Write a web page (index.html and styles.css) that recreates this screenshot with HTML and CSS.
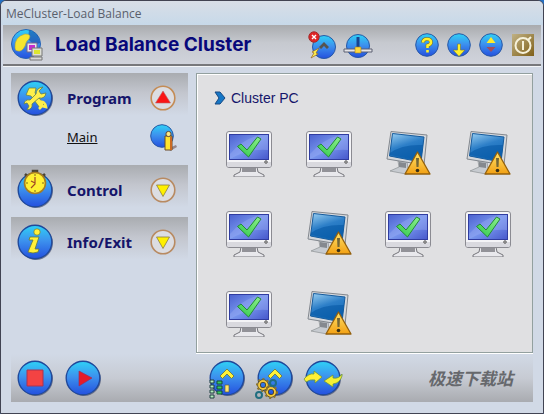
FILE: index.html
```html
<!DOCTYPE html>
<html lang="en">
<head>
<meta charset="utf-8">
<title>MeCluster-Load Balance</title>
<link rel="stylesheet" href="styles.css">
</head>
<body>
<svg class="defs" aria-hidden="true">
  <defs>
    <linearGradient id="blue" x1="0" y1="0" x2="0" y2="1"><stop offset="0" stop-color="#2ed2f6"/><stop offset=".45" stop-color="#3d93ee"/><stop offset="1" stop-color="#2450de"/></linearGradient>
    <linearGradient id="screen" x1="0" y1="0" x2="1" y2="1"><stop offset="0" stop-color="#4c62cf"/><stop offset=".5" stop-color="#7896ee"/><stop offset="1" stop-color="#4657cb"/></linearGradient>
    <linearGradient id="glass" x1="0" y1="0" x2=".4" y2="1"><stop offset="0" stop-color="#9bd0f2"/><stop offset=".5" stop-color="#2d7fc8"/><stop offset="1" stop-color="#1268b4"/></linearGradient>
    <linearGradient id="amber" x1="0" y1="0" x2="0" y2="1"><stop offset="0" stop-color="#ffe36a"/><stop offset="1" stop-color="#f2a013"/></linearGradient>
    <linearGradient id="green" x1="1" y1="0" x2="0" y2="1"><stop offset="0" stop-color="#8df08a"/><stop offset="1" stop-color="#2fc84c"/></linearGradient>
    <linearGradient id="bronze" x1="0" y1="0" x2="1" y2="1"><stop offset="0" stop-color="#c0b184"/><stop offset="1" stop-color="#806018"/></linearGradient>
  </defs>
  <symbol id="ball" viewBox="0 0 36 36"><circle cx="19" cy="19" r="17" fill="#49516f" opacity=".7"/><circle cx="18" cy="18" r="16.8" fill="url(#blue)" stroke="#20499b" stroke-width="1.4"/></symbol>
  <symbol id="pc-ok" viewBox="0 0 48 48">
    <path d="M16 38h16l1 5 6 3v2H9v-2l6-3z" fill="#e8e8ec" stroke="#77777d"/><path d="M17 39h14v4H17z" fill="#929298"/>
    <rect x="1.5" y="2.5" width="45" height="36" rx="2.5" fill="#f4f4f7" stroke="#8b8b92"/>
    <path d="M2 33h44v3q0 2-2 2H4q-2 0-2-2z" fill="#d9d9df"/>
    <rect x="4.5" y="5.5" width="39" height="25" fill="url(#screen)" stroke="#303ca0"/>
    <path d="M5 25Q18 10 35 6h8v15Q25 19 5 30z" fill="#9cadf2" opacity=".4"/>
    <path d="M12.5 17.500 16 15l6 6L32.500 8l3.500 2-12.500 18z" fill="url(#green)" stroke="#238b36"/>
    <path d="m41 31 2 2-2 2-2-2z" fill="#444"/><circle cx="41" cy="33" r=".7" fill="#fff"/>
  </symbol>
  <symbol id="pc-warn" viewBox="0 0 48 48">
    <path d="M14 32l9 1 1 6 6 4-8 2-16-3 9-4z" fill="#c7cbd0" stroke="#8c9094" stroke-width=".7"/><path d="M15 33l7 1v5l-7-1z" fill="#85898f"/>
    <path d="M7 2.500 43 6l-3 30L3 30z" fill="#d5d8dc" stroke="#82878e"/>
    <path d="M8.500 4.500 40 8l-3 25L5.500 27z" fill="url(#glass)" stroke="#155b9d"/>
    <path d="M6 24Q18 15 39 16l-2 16-31-6z" fill="#0759a5" opacity=".6"/>
    <path d="M33.500 23 46 45H21z" fill="url(#amber)" stroke="#94600c" stroke-width="1.300" stroke-linejoin="round"/>
    <path d="M32 29h3l-.5 9h-2z" fill="#756735"/><circle cx="33.500" cy="41.500" r="1.800" fill="#383018"/>
  </symbol>
  <symbol id="ring-down" viewBox="0 0 26 26"><circle cx="13" cy="13" r="11.800" fill="#dcdde2" stroke="#b88a61" stroke-width="1.600"/><path d="M6.500 8h13L13 19.500z" fill="#fff000" stroke="#8b7d42" stroke-width=".8"/></symbol>
</svg>

<div class="window">
  <header class="titlebar">MeCluster-Load Balance</header>

  <div class="toolbar">
    <svg class="logo" viewBox="0 0 32 32" aria-hidden="true">
      <circle cx="15" cy="15" r="14.500" fill="url(#blue)" stroke="#2864b5"/>
      <path d="M18 1q10 3 11 13l-6 2-6-6z" fill="#153d9a" opacity=".55"/>
      <path d="M4 19Q3 8 14 5q7 0 4 5-3 2-4 7-3 6-7 5-3 0-3-3z" fill="#f6e52f" stroke="#b2a63b" stroke-width=".6"/>
      <path d="M16 14h10v9H16z" fill="#e8e4ee" stroke="#72698a"/><path d="M18 16h6v5h-6z" fill="#c52ad0"/>
      <path d="M21 19h10v8H21z" fill="#dedfd4" stroke="#777"/><path d="M23 21h6v4h-6z" fill="#dce62f"/><path d="M19 28h12v3H19z" fill="#d8d8d8" stroke="#777"/>
    </svg>
    <h1 class="heading">Load Balance Cluster</h1>
    <div class="tools">
      <button class="tool" aria-label="Disconnect"><svg class="icon-28" viewBox="0 0 28 28">
        <circle cx="16" cy="16" r="11.500" fill="url(#blue)" stroke="#2858a5"/><path d="m11 16 5-5 5 5-2 2-3-3-3 3z" fill="#55544f"/>
        <path d="m3 27 3-5-2-1 7-4-3 5 2 1z" fill="#fff04b" stroke="#946329" stroke-width=".7"/>
        <circle cx="6" cy="6" r="5.200" fill="#df2525" stroke="#a52b2b"/><path d="m4 4 4 4m0-4-4 4" stroke="#fff" stroke-width="1.400"/></svg></button>
      <button class="tool" aria-label="Network"><svg class="icon-28" viewBox="0 0 28 28">
        <circle cx="14" cy="15" r="11.500" fill="url(#blue)" stroke="#2858a5"/><path d="M12.500 6h3v10h-3z" fill="#18438e"/>
        <path d="M0 18h28v3H0z" fill="#e4e4e8" stroke="#5c6172"/><path d="M11 16h6v6h-6z" fill="#ffd83d" stroke="#a27c28" stroke-width=".6"/></svg></button>
    </div>
    <div class="tools tools-end">
      <button class="tool" aria-label="Help"><svg class="icon-24" viewBox="0 0 24 24"><circle cx="12" cy="12" r="11.300" fill="url(#blue)" stroke="#2858a5"/><path d="M8 9.500Q8 6 12 6t4 3.200q0 2.300-3.500 3.300V15" fill="none" stroke="#776a20" stroke-width="3.600"/><path d="M8 9.500Q8 6 12 6t4 3.200q0 2.300-3.500 3.300V15m0 2v2.500" fill="none" stroke="#fff12b" stroke-width="2.600"/></svg></button>
      <button class="tool" aria-label="Minimize"><svg class="icon-24" viewBox="0 0 24 24"><circle cx="12" cy="12" r="11.300" fill="url(#blue)" stroke="#2858a5"/><path d="M10.500 11h3v6h4.500l-6 6.500L6 17h4.500z" fill="#fff02b" stroke="#6d7b52" stroke-width=".7"/></svg></button>
      <button class="tool" aria-label="Resize"><svg class="icon-24" viewBox="0 0 24 24"><circle cx="12" cy="12" r="11.300" fill="url(#blue)" stroke="#2858a5"/><path d="m12 4 4.500 6h-9z" fill="#ffec2b"/><path d="m12 19 4.500-5h-9z" fill="#a34c5c"/></svg></button>
      <button class="tool" aria-label="Exit"><svg class="icon-24" viewBox="0 0 24 24"><path d="M1 1h22v22H1z" fill="url(#bronze)"/><circle cx="12" cy="12.500" r="7.500" fill="none" stroke="#f6f1da" stroke-width="2"/><path d="M12 8v9m5-10 3-3" stroke="#f6f1da" stroke-width="2"/></svg></button>
    </div>
  </div>

  <div class="content">
    <nav class="sidebar">
      <button class="section"><svg class="icon-36" viewBox="0 0 36 36"><use href="#ball"/>
        <path d="M12 8h7l-1 5 9 11-4 4-9-12-5-1z" fill="#fff04a" stroke="#69854b" stroke-width=".8"/>
        <path d="m26 7-4 4 2 3 5-1q-1 6-7 5l-7 6q1 5-5 6l2-4-2-3-3 1q1-5 6-4l6-6q0-6 7-7z" fill="#ffef4c" stroke="#5d7f55" stroke-width=".8"/><path d="M23 22q5-1 6 5l-4-1-3 3" fill="none" stroke="#ffef4c" stroke-width="2.500"/></svg>
        <span>Program</span>
        <svg class="icon-26" viewBox="0 0 26 26"><circle cx="13" cy="13" r="11.800" fill="#dcdde2" stroke="#c48c55" stroke-width="1.600"/><path d="M13 6 20.500 18h-15z" fill="#fa1515" stroke="#b86767" stroke-width=".6"/></svg></button>
      <div class="entry"><a href="#main">Main</a>
        <svg class="icon-26" viewBox="0 0 26 26"><path d="m19 24 7-3 1 2-7 4z" fill="#96868a"/><circle cx="12" cy="12" r="11.300" fill="url(#blue)" stroke="#2858a5"/><path d="M15 12h7v14h-7z" fill="#ffe32e" stroke="#6b4b28"/><path d="M20 13h2v13h-2z" fill="#cb6a22"/><circle cx="18.500" cy="10" r="2.600" fill="#ffe984" stroke="#5d4938"/></svg></div>
      <button class="section"><svg class="icon-36" viewBox="0 0 36 36"><use href="#ball"/>
        <path d="m8 2 3 3m17-3-3 3M16-1h4v4h-4z" stroke="#4b4535" stroke-width="2.500" fill="#777"/><circle cx="18" cy="11" r="10.500" fill="#fff032" stroke="#a77d21" stroke-width="1.600"/><path d="M18 5v7l-4 4m4-5-4-2" fill="none" stroke="#a14826" stroke-width="1.200"/><path d="M18 2v2m0 14v2M9 11h2m14 0h2" stroke="#806b1e"/></svg>
        <span>Control</span><svg class="icon-26"><use href="#ring-down"/></svg></button>
      <button class="section"><svg class="icon-36" viewBox="0 0 36 36"><use href="#ball"/>
        <circle cx="20" cy="8" r="3.200" fill="#fff13a" stroke="#66783c" stroke-width=".7"/><path d="M13 13h9l-4 12h4l-1 3q-5 2-10 0l5-12h-4z" fill="#fff13a" stroke="#66783c" stroke-width=".8"/></svg>
        <span>Info/Exit</span><svg class="icon-26"><use href="#ring-down"/></svg></button>
    </nav>

    <main class="panel" id="main">
      <h2 class="panel-title"><svg class="chevron" viewBox="0 0 12 14"><path d="M1 1h5l5 6-5 6H1l4-6z" fill="#1677c6" stroke="#184982"/></svg>Cluster PC</h2>
      <div class="pcs">
        <svg class="pc" role="img" aria-label="Online"><use href="#pc-ok"/></svg>
        <svg class="pc" role="img" aria-label="Online"><use href="#pc-ok"/></svg>
        <svg class="pc" role="img" aria-label="Warning"><use href="#pc-warn"/></svg>
        <svg class="pc" role="img" aria-label="Warning"><use href="#pc-warn"/></svg>
        <svg class="pc" role="img" aria-label="Online"><use href="#pc-ok"/></svg>
        <svg class="pc" role="img" aria-label="Warning"><use href="#pc-warn"/></svg>
        <svg class="pc" role="img" aria-label="Online"><use href="#pc-ok"/></svg>
        <svg class="pc" role="img" aria-label="Online"><use href="#pc-ok"/></svg>
        <svg class="pc" role="img" aria-label="Online"><use href="#pc-ok"/></svg>
        <svg class="pc" role="img" aria-label="Warning"><use href="#pc-warn"/></svg>
      </div>
    </main>
  </div>

  <footer class="actions">
    <div class="group">
      <button aria-label="Stop"><svg class="icon-36" viewBox="0 0 36 36"><use href="#ball"/><path d="M10 10h16v16H10z" fill="#f34343" stroke="#a93352"/></svg></button>
      <button aria-label="Start"><svg class="icon-36" viewBox="0 0 36 36"><use href="#ball"/><path d="m14 11 13 7-13 8z" fill="#e51b29" stroke="#943061" stroke-width=".7"/></svg></button>
    </div>
    <div class="group group-main">
      <button aria-label="Servers"><svg class="icon-36" viewBox="0 0 36 36"><use href="#ball"/>
        <path d="m11 16 7-7 7 7-2.500 2.500L18 14l-4.500 4.500z" fill="#fff238" stroke="#63713d" stroke-width=".8"/>
        <path d="M1 20h4v3H1zm0 5h4v3H1zm0 5h4v3H1zm0 5h4v3H1z" fill="#b5efbc" stroke="#1f3c40"/><path d="M8 21h5v3H8zm0 5h5v3H8zm0 5h5v3H8z" fill="#36cb65" stroke="#174b35"/><path d="M16 25h4v7h-4z" fill="#ffe36c" stroke="#5c6340" stroke-width=".7"/></svg></button>
      <button aria-label="Settings"><svg class="icon-36" viewBox="0 0 36 36"><use href="#ball"/>
        <path d="m11 16 7-7 7 7-2.500 2.500L18 14l-4.500 4.500z" fill="#fff238" stroke="#63713d" stroke-width=".8"/>
        <g fill="none" stroke="#473d28" stroke-width="3.600"><circle cx="6" cy="25" r="4"/><circle cx="14" cy="32" r="4"/></g>
        <g fill="none" stroke="#f2c93e" stroke-width="2"><circle cx="6" cy="25" r="4"/><circle cx="14" cy="32" r="4"/></g>
        <g fill="none" stroke="#8c752c" stroke-width="2" stroke-dasharray="2 2.500"><circle cx="6" cy="25" r="6"/><circle cx="14" cy="32" r="6"/></g>
        <g fill="none" stroke="#216e80" stroke-width="2"><circle cx="16" cy="23" r="3"/><circle cx="2" cy="35" r="3"/></g></svg></button>
      <button aria-label="Balance"><svg class="icon-36" viewBox="0 0 36 36"><use href="#ball"/>
        <path d="M-1 19q5-6 10-5V11l8 6-7 6v-3q-5-1-9 2z" fill="#fff034" stroke="#68953e" stroke-width=".8"/><path d="M37 14q-3 5-9 4v-3l-9 6 9 6v-3q7-1 9-8z" fill="#f5f034" stroke="#68953e" stroke-width=".8"/></svg></button>
    </div>
    <span class="mark" lang="zh">极速下载站</span>
  </footer>
</div>
</body>
</html>
```

FILE: styles.css
```css
* { box-sizing: border-box; }

body {
  margin: 0;
  background: #2470c4;
  font-family: "Liberation Sans", sans-serif;
  color: #15156a;
}

.defs { position: absolute; width: 0; height: 0; }
svg { display: block; flex: none; overflow: visible; }

button {
  display: block;
  padding: 0;
  border: 0;
  background: none;
  color: inherit;
  cursor: pointer;
}

.icon-24 { width: 24px; height: 24px; }
.icon-26 { width: 26px; height: 26px; }
.icon-28 { width: 28px; height: 28px; }
.icon-36 { width: 36px; height: 36px; }

.window {
  display: flex;
  flex-direction: column;
  min-height: 100vh;
  padding: 0 2px 11px;
  border: 1px solid #414352;
  border-radius: 6px 6px 0 0;
  background: #d1d9e6;
}

.titlebar {
  height: 24px;
  margin: 0 -2px;
  padding: 0 5px;
  border-radius: 5px 5px 0 0;
  background: linear-gradient(#d8dee7, #c7d9e9);
  color: #5a606c;
  font: 12px/26px "Open Sans", sans-serif;
}

.toolbar {
  display: flex;
  align-items: center;
  height: 41px;
  padding: 0 6px 0 8px;
  border-bottom: 2px solid #77787c;
  background: linear-gradient(#a9abae, #c6c9cf 45%, #d0d3dc);
}

.logo { width: 32px; height: 32px; }

.heading {
  flex: 0 0 253px;
  margin: 0 0 0 12px;
  color: #08087a;
  font: bold 19px/24px Inter, "Liberation Sans", sans-serif;
}

.tools { display: flex; gap: 8px; }
.tools-end { margin-left: auto; }

.content {
  display: grid;
  grid-template-columns: 177px 1fr;
  gap: 8px;
  flex: 1;
  padding: 6px 8px 0;
  border-top: 1px solid #f3f5f8;
}

.section {
  display: grid;
  grid-template-columns: 50px 1fr 26px;
  align-items: center;
  width: 100%;
  height: 50px;
  margin-bottom: 2px;
  padding: 0 12px 0 6px;
  background: linear-gradient(#a9acb0, #c3c6ce 40%, #d1d9e6 85%);
  font: bold 15px/20px "Noto Sans", sans-serif;
  text-align: left;
}

.entry {
  display: flex;
  align-items: center;
  justify-content: space-between;
  height: 24px;
  margin-bottom: 16px;
  padding: 0 12px 0 56px;
}

.entry a { color: #111; font: 13px/20px "Noto Sans", sans-serif; }

.panel {
  padding: 16px 4px 0 12px;
  border: 1px solid #93a09f;
  background: #e0e0e2;
  box-shadow: inset 1px 1px #fff, 0 1px #fff;
}

.panel-title {
  display: flex;
  align-items: center;
  gap: 5px;
  margin: 0 0 23px 5px;
  font-size: 14px;
  font-weight: normal;
  line-height: 16px;
}

.chevron { width: 12px; height: 14px; }

.pcs {
  display: grid;
  grid-template-columns: repeat(4, 1fr);
  gap: 32px 0;
  justify-items: center;
}

.pc { width: 48px; height: 48px; }

.actions {
  display: grid;
  grid-template-columns: 185px 1fr auto;
  align-items: center;
  height: 48px;
  margin: 1px 8px 0;
  padding-right: 20px;
  background: linear-gradient(#d1d9e6, #c7cbd3 50%, #a9abb0);
}

.group { display: flex; gap: 12px; padding-left: 6px; }
.group-main { padding-left: 13px; }

.mark {
  color: #66686c;
  font: italic bold 17px/24px "Noto Sans CJK SC", sans-serif;
}
```
